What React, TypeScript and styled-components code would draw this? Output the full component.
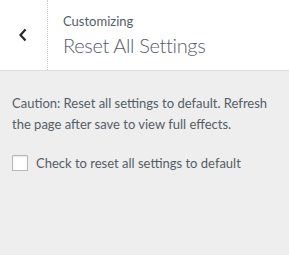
import React from 'react';
import styled, {createGlobalStyle} from 'styled-components';

const GlobalStyle = createGlobalStyle`
  html, body {
    margin: 0;
    padding: 0;
    background: #eeeeee;
  }
  body {
    font-family: Lato, "Liberation Sans", sans-serif;
    -webkit-font-smoothing: antialiased;
  }
`

const Panel = styled.div`
  width: 289px;
  height: 255px;
  background: #eeeeee;
  overflow: hidden;
`

const Header = styled.div`
  display: flex;
  height: 70px;
  background: #ffffff;
  border-bottom: 1px solid #dddddd;
`

const BackButton = styled.button`
  width: 48px;
  flex: none;
  display: flex;
  align-items: center;
  justify-content: center;
  padding: 0 2px 0 0;
  border: none;
  border-right: 1px dotted #cccccc;
  background: transparent;
  color: #23282d;
  cursor: pointer;
`

const TitleBlock = styled.div`
  display: flex;
  flex-direction: column;
  padding: 10px 0 0 15px;
`

const Action = styled.span`
  font-size: 13px;
  line-height: 22px;
  color: #555d66;
`

const Title = styled.h3`
  margin: 0;
  font-size: 20px;
  font-weight: 300;
  line-height: 26px;
  letter-spacing: -0.35px;
  color: #555d66;
`

const Content = styled.div`
  padding: 22px 12px 0;
`

const Description = styled.p`
  margin: 0 0 20px;
  font-size: 13px;
  line-height: 21px;
  color: #555d66;
`

const CheckRow = styled.label`
  display: flex;
  align-items: center;
  gap: 8px;
  font-size: 13px;
  color: #555d66;
  cursor: pointer;
`

const Box = styled.input`
  appearance: none;
  width: 16px;
  height: 16px;
  margin: 0;
  background: #ffffff;
  border: 1px solid #b4b9be;
  box-shadow: inset 0 1px 2px rgba(0, 0, 0, 0.1);
`

export default function App() {
  return (
    <Panel>
      <GlobalStyle/>
      <Header>
        <BackButton aria-label="Back">
          <svg width="10" height="14" viewBox="0 0 10 14">
            <path d="M7.5 1.5 L2.5 7 L7.5 12.5" fill="none" stroke="#23282d" strokeWidth="2.2"/>
          </svg>
        </BackButton>
        <TitleBlock>
          <Action>Customizing</Action>
          <Title>Reset All Settings</Title>
        </TitleBlock>
      </Header>
      <Content>
        <Description>
          Caution: Reset all settings to default. Refresh the page after save to view full effects.
        </Description>
        <CheckRow>
          <Box type="checkbox"/>
          Check to reset all settings to default
        </CheckRow>
      </Content>
    </Panel>
  );
}
